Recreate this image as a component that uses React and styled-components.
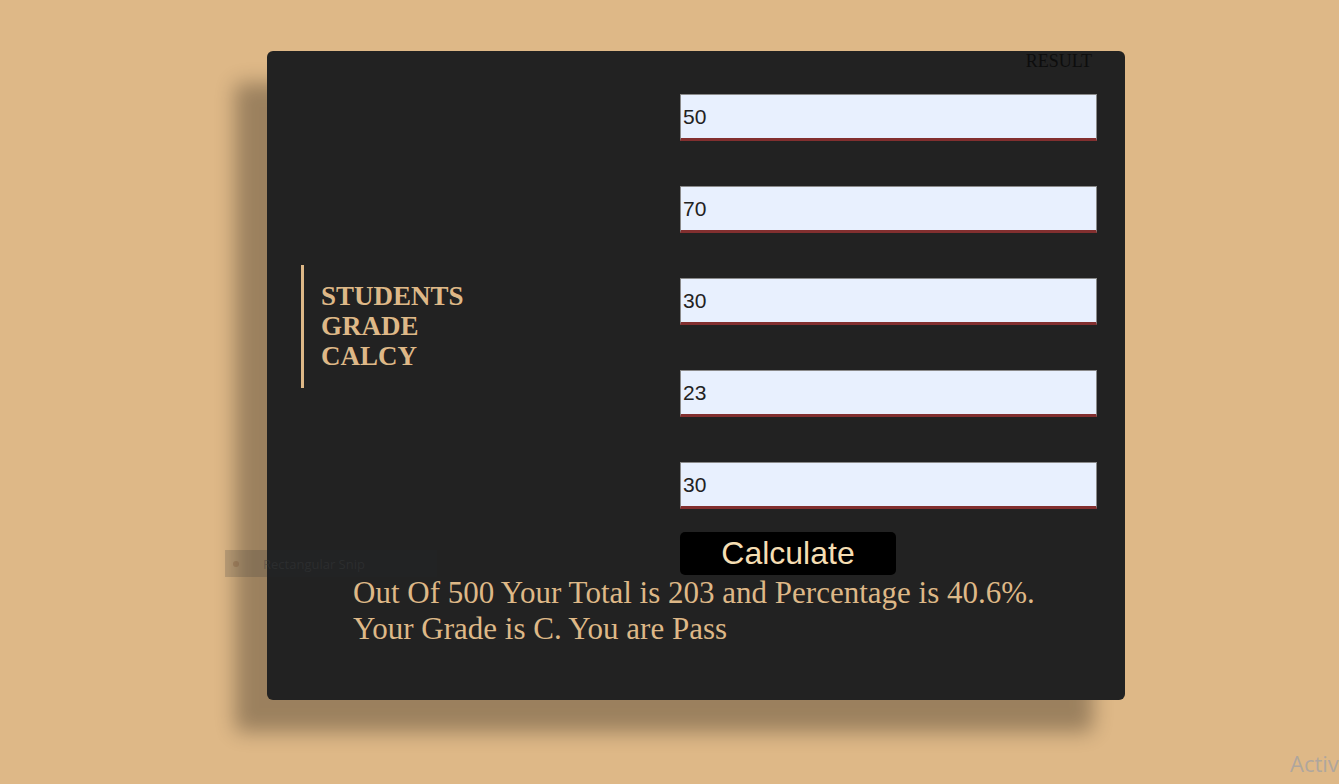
import styled, { createGlobalStyle } from "styled-components";

/*
Student grade calculator card, five marks in, total / percentage / grade out.
*/

const marks = ["50", "70", "30", "23", "30"];

function App() {
  const total = marks.reduce((sum, m) => sum + Number(m), 0);
  const percent = (total / 500) * 100;

  return (
    <>
      <GlobalStyle />
      <Page.Wrapper>
        <Card.Wrapper>
          <Card.Header>RESULT</Card.Header>
          <Card.Body>
            <Title.Wrapper>
              <Title.Block>
                STUDENTS
                <br />
                GRADE
                <br />
                CALCY
              </Title.Block>
            </Title.Wrapper>
            <Form.Wrapper>
              {marks.map((m, i) => (
                <Form.Input key={i} type="text" defaultValue={m} />
              ))}
              <Form.Button>Calculate</Form.Button>
            </Form.Wrapper>
          </Card.Body>
          <Card.Result>
            Out Of 500 Your Total is {total} and Percentage is {percent}%.
            <br />
            Your Grade is C. You are Pass
          </Card.Result>
        </Card.Wrapper>
        <Overlay.Snip>
          <Overlay.Dot />
          Rectangular Snip
        </Overlay.Snip>
        <Overlay.Watermark>Activ</Overlay.Watermark>
      </Page.Wrapper>
    </>
  );
}

const GlobalStyle = createGlobalStyle`
  html, body {
    margin: 0;
    padding: 0;
    overflow: hidden;
    background: #deb887;
  }
`;

const Page = {
  Wrapper: styled.div`
    position: relative;
    width: 1339px;
    height: 784px;
    padding: 51px 0 0 267px;
    box-sizing: border-box;
    background: #deb887;
  `
};

const Card = {
  Wrapper: styled.div`
    width: 858px;
    height: 649px;
    box-sizing: border-box;
    background: #222222;
    border-radius: 6px;
    box-shadow: -32px 32px 20px rgba(0, 0, 0, 0.3);
    display: flex;
    flex-direction: column;
  `,
  Header: styled.div`
    align-self: flex-end;
    margin-right: 33px;
    font-family: "Liberation Serif", "Times New Roman", serif;
    font-size: 18px;
    line-height: 21px;
    color: #0d0d0d;
  `,
  Body: styled.div`
    display: grid;
    grid-template-columns: 413px 417px;
    margin-top: 22px;
  `,
  Result: styled.div`
    padding-left: 86px;
    font-family: "Liberation Serif", "Times New Roman", serif;
    font-size: 31px;
    line-height: 36px;
    color: #deb887;
  `
};

const Title = {
  Wrapper: styled.div`
    padding: 171px 0 0 34px;
  `,
  Block: styled.div`
    width: max-content;
    border-left: 3px solid #deb887;
    padding: 16px 0 17px 17px;
    font-family: "Liberation Serif", "Times New Roman", serif;
    font-weight: bold;
    font-size: 27px;
    line-height: 30px;
    color: #deb887;
  `
};

const Form = {
  Wrapper: styled.div`
    display: flex;
    flex-direction: column;
    align-items: flex-start;
    gap: 45px;
  `,
  Input: styled.input`
    width: 417px;
    height: 47px;
    box-sizing: border-box;
    margin: 0;
    padding: 0 2px;
    background: #e8f0fe;
    border: 1px solid #8a8a8a;
    border-bottom: 3px solid #822f2f;
    outline: none;
    font-family: "Liberation Sans", Arial, sans-serif;
    font-size: 21px;
    color: #222222;
  `,
  Button: styled.button`
    margin-top: -22px;
    width: 216px;
    height: 43px;
    border: none;
    border-radius: 5px;
    background: #000000;
    color: #f5deb3;
    font-family: "Liberation Sans", Arial, sans-serif;
    font-size: 32px;
    line-height: 43px;
    padding: 0;
    cursor: pointer;
  `
};

const Overlay = {
  Snip: styled.div`
    position: absolute;
    left: 225px;
    top: 550px;
    width: 212px;
    height: 27px;
    display: flex;
    align-items: center;
    gap: 24px;
    padding-left: 8px;
    box-sizing: border-box;
    background: rgba(40, 46, 48, 0.18);
    font-family: "Open Sans", "Noto Sans", sans-serif;
    font-size: 13px;
    color: rgba(60, 62, 64, 0.4);
  `,
  Dot: styled.span`
    width: 6px;
    height: 6px;
    border-radius: 50%;
    background: rgba(120, 80, 50, 0.3);
  `,
  Watermark: styled.div`
    position: absolute;
    left: 1290px;
    top: 748px;
    white-space: nowrap;
    font-family: "Open Sans", "Noto Sans", sans-serif;
    font-size: 22px;
    color: rgba(160, 160, 165, 0.75);
  `
};

export default App;
